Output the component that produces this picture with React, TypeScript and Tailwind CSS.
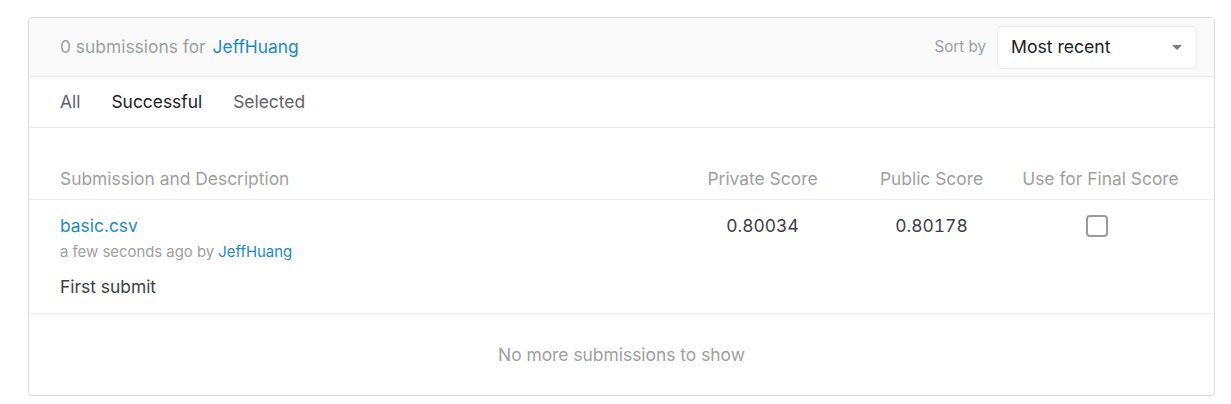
import React from 'react';

const NoSubmissionsCard = () => {
  return (
    <div className="min-h-screen bg-white pl-[28px] pt-[17px]" style={{ fontFamily: 'Inter, "Noto Sans", sans-serif' }}>
      <div className="w-[1187px] border border-[#dadce0] rounded-[4px] overflow-hidden">
        {/* header */}
        <div className="h-[59px] bg-[#fafafa] border-b border-[#e8e8e8] flex items-center justify-between pl-[31px] pr-[17px]">
          <div className="text-[17.4px] leading-6 text-[#9aa0a6]">
            0 submissions for <span className="text-[#1e8bc3] ml-[2px]">JeffHuang</span>
          </div>
          <div className="flex items-center gap-[11px]">
            <span className="text-[15.2px] text-[#9aa0a6]">Sort by</span>
            <div className="w-[200px] h-[43px] bg-white border border-[#ececec] rounded-[4px] flex items-center justify-between pl-[13px] pr-[14px]">
              <span className="text-[17.6px] leading-6 text-[#202124]">Most recent</span>
              <span className="w-0 h-0 border-l-[5px] border-r-[5px] border-t-[5px] border-l-transparent border-r-transparent border-t-[#7a7a7a]" />
            </div>
          </div>
        </div>

        {/* tabs */}
        <div className="h-[51px] border-b border-[#e8e8e8] flex items-center gap-[31px] pl-[31px] text-[17.4px] leading-6">
          <span className="text-[#5f6368]">All</span>
          <span className="text-[#202124]">Successful</span>
          <span className="text-[#5f6368]">Selected</span>
        </div>

        {/* table header */}
        <div className="flex items-center pt-[39px] pb-[8px] pl-[31px] pr-[29px] border-b border-[#eeeeee] text-[17.4px] leading-6 text-[#a0a0a0]">
          <div className="flex-1">Submission and Description</div>
          <div className="w-[169px] text-center">Private Score</div>
          <div className="w-[169px] text-center">Public Score</div>
          <div className="w-[169px] text-center">Use for Final Score</div>
        </div>

        {/* row */}
        <div className="flex items-start pt-[14px] pb-[14px] pl-[31px] pr-[29px] border-b border-[#eeeeee]">
          <div className="flex-1">
            <div className="text-[17.4px] leading-6 text-[#1e8bc3]">basic.csv</div>
            <div className="text-[14.9px] leading-5 text-[#a0a0a0] mt-[4px]">
              a few seconds ago by <span className="text-[#1e8bc3]">JeffHuang</span>
            </div>
            <div className="text-[17.4px] leading-6 text-[#3c4043] mt-[13px]">First submit</div>
          </div>
          <div className="w-[169px] text-center text-[17.4px] leading-6 text-[#3c4043] tabular-nums">0.80034</div>
          <div className="w-[169px] text-center text-[17.4px] leading-6 text-[#3c4043] tabular-nums">0.80178</div>
          <div className="w-[169px] flex justify-center pt-[1px] pr-[8px]">
            <div className="w-[22px] h-[22px] border-2 border-[#9a9a9a] rounded-[4px] bg-white" />
          </div>
        </div>

        {/* footer */}
        <div className="pt-[29px] pb-[28px] text-center text-[17.4px] leading-6 text-[#a0a0a0]">
          No more submissions to show
        </div>
      </div>
    </div>
  );
};

export default function App() {
  return <NoSubmissionsCard />;
}
